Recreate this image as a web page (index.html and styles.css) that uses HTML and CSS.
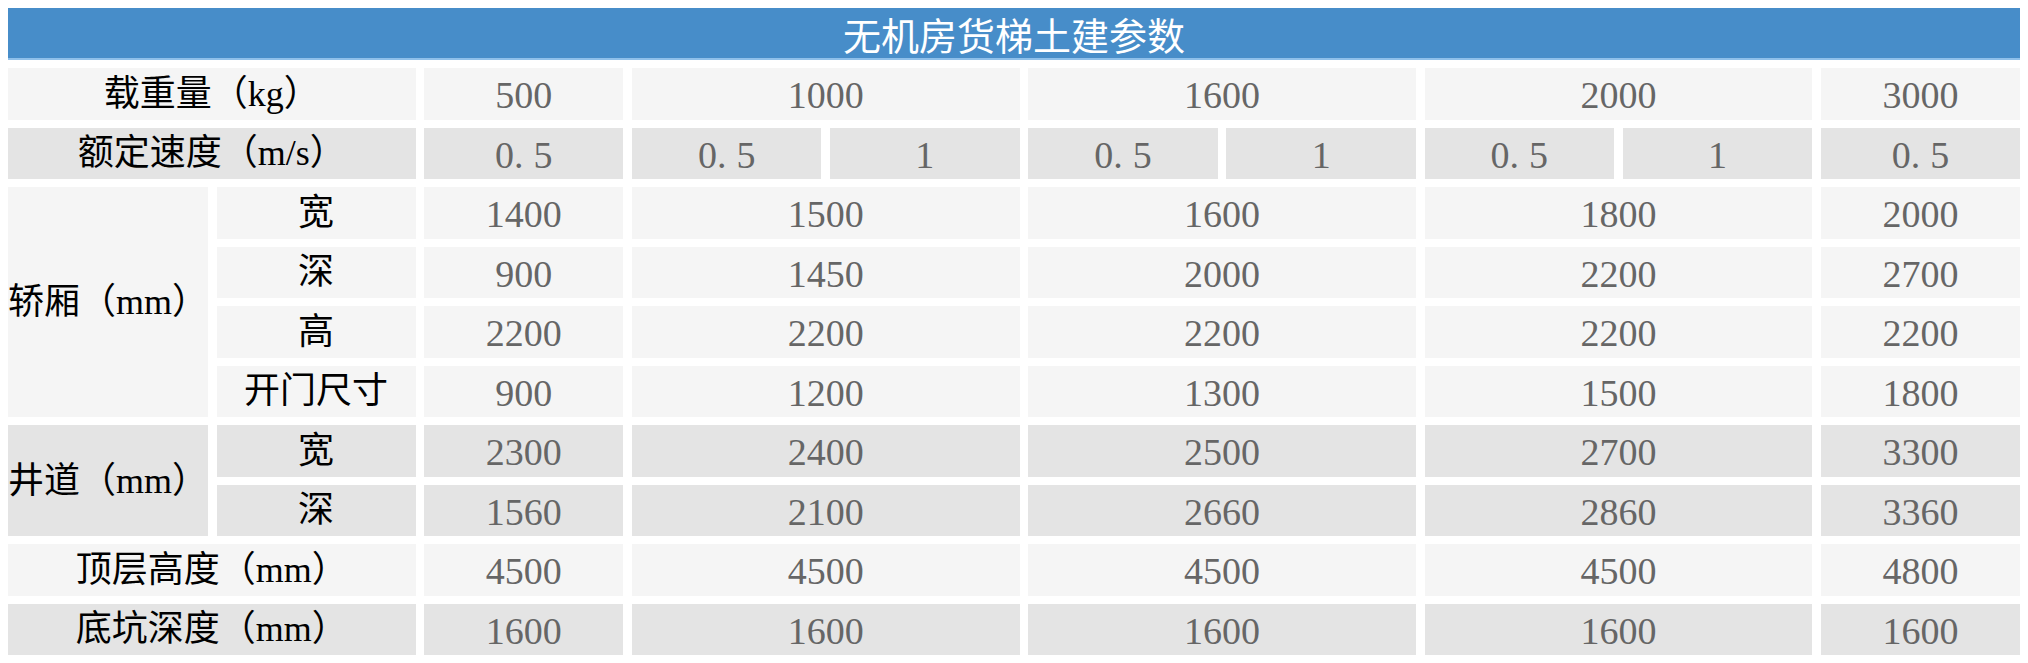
FILE: index.html
```html
<!DOCTYPE html>
<html lang="zh-CN">
<head>
<meta charset="utf-8">
<title>无机房货梯土建参数</title>
<link rel="stylesheet" href="styles.css">
</head>
<body>
<div class="table">
  <div class="title">无机房货梯土建参数</div>

  <div class="cell light label c12">载重量（kg）</div>
  <div class="cell light num">500</div>
  <div class="cell light num c2">1000</div>
  <div class="cell light num c2">1600</div>
  <div class="cell light num c2">2000</div>
  <div class="cell light num">3000</div>

  <div class="cell dark label c12">额定速度（m/s）</div>
  <div class="cell dark num">0<span class="dot">.</span>5</div>
  <div class="cell dark num">0<span class="dot">.</span>5</div>
  <div class="cell dark num">1</div>
  <div class="cell dark num">0<span class="dot">.</span>5</div>
  <div class="cell dark num">1</div>
  <div class="cell dark num">0<span class="dot">.</span>5</div>
  <div class="cell dark num">1</div>
  <div class="cell dark num">0<span class="dot">.</span>5</div>

  <div class="cell light label r4">轿厢（mm）</div>
  <div class="cell light label">宽</div>
  <div class="cell light num">1400</div>
  <div class="cell light num c2">1500</div>
  <div class="cell light num c2">1600</div>
  <div class="cell light num c2">1800</div>
  <div class="cell light num">2000</div>

  <div class="cell light label">深</div>
  <div class="cell light num">900</div>
  <div class="cell light num c2">1450</div>
  <div class="cell light num c2">2000</div>
  <div class="cell light num c2">2200</div>
  <div class="cell light num">2700</div>

  <div class="cell light label">高</div>
  <div class="cell light num">2200</div>
  <div class="cell light num c2">2200</div>
  <div class="cell light num c2">2200</div>
  <div class="cell light num c2">2200</div>
  <div class="cell light num">2200</div>

  <div class="cell light label">开门尺寸</div>
  <div class="cell light num">900</div>
  <div class="cell light num c2">1200</div>
  <div class="cell light num c2">1300</div>
  <div class="cell light num c2">1500</div>
  <div class="cell light num">1800</div>

  <div class="cell dark label r2">井道（mm）</div>
  <div class="cell dark label">宽</div>
  <div class="cell dark num">2300</div>
  <div class="cell dark num c2">2400</div>
  <div class="cell dark num c2">2500</div>
  <div class="cell dark num c2">2700</div>
  <div class="cell dark num">3300</div>

  <div class="cell dark label">深</div>
  <div class="cell dark num">1560</div>
  <div class="cell dark num c2">2100</div>
  <div class="cell dark num c2">2660</div>
  <div class="cell dark num c2">2860</div>
  <div class="cell dark num">3360</div>

  <div class="cell light label c12">顶层高度（mm）</div>
  <div class="cell light num">4500</div>
  <div class="cell light num c2">4500</div>
  <div class="cell light num c2">4500</div>
  <div class="cell light num c2">4500</div>
  <div class="cell light num">4800</div>

  <div class="cell dark label c12">底坑深度（mm）</div>
  <div class="cell dark num">1600</div>
  <div class="cell dark num c2">1600</div>
  <div class="cell dark num c2">1600</div>
  <div class="cell dark num c2">1600</div>
  <div class="cell dark num">1600</div>
</div>
</body>
</html>
```

FILE: styles.css
```css
html, body {
  background: #ffffff;
}
body {
  margin: 8px;
}
.table {
  display: grid;
  grid-template-columns: 21fr 21fr 21fr 20fr 20fr 20fr 20fr 20fr 20fr 21fr;
  grid-template-rows: 52px repeat(10, 51.5px);
  column-gap: 8.5px;
  row-gap: 8px;
  width: 2012px;
}
.title {
  grid-column: 1 / -1;
  background: #478dc9;
  border-bottom: 2px solid #8fc0ea;
  color: #ffffff;
  font-family: "Noto Sans CJK SC", "Noto Sans", sans-serif;
  font-size: 38px;
  display: flex;
  align-items: center;
  justify-content: center;
  line-height: 1;
  padding-top: 2px;
}
.cell {
  display: flex;
  align-items: center;
  justify-content: center;
  line-height: 1;
  white-space: nowrap;
}
.light { background: #f5f5f5; }
.dark { background: #e4e4e4; }
.label {
  color: #000000;
  font-family: "Liberation Serif", "Noto Sans CJK SC", serif;
  font-size: 36px;
  font-weight: 400;
}
.num {
  color: #666666;
  font-family: "Liberation Serif", serif;
  font-size: 38px;
  padding-top: 3px;
}
.dot {
  margin-right: 10px;
}
.c12 { grid-column: 1 / 3; }
.c2 { grid-column: span 2; }
.r4 { grid-row: span 4; }
.r2 { grid-row: span 2; }
```
